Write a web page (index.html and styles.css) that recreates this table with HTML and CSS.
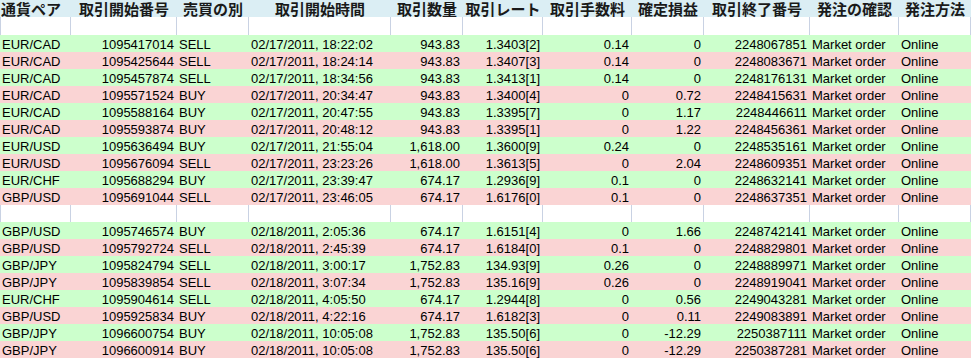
FILE: index.html
```html
<!DOCTYPE html>
<html lang="ja">
<head>
<meta charset="utf-8">
<title>取引履歴</title>
<link rel="stylesheet" href="styles.css">
</head>
<body>
<div class="sheet">
  <div class="row head">
    <div class="cell first">通貨ペア</div>
    <div class="cell">取引開始番号</div>
    <div class="cell">売買の別</div>
    <div class="cell">取引開始時間</div>
    <div class="cell">取引数量</div>
    <div class="cell">取引レート</div>
    <div class="cell">取引手数料</div>
    <div class="cell">確定損益</div>
    <div class="cell">取引終了番号</div>
    <div class="cell">発注の確認</div>
    <div class="cell">発注方法</div>
  </div>
  <div class="row blank tall">
    <div class="cell"></div><div class="cell"></div><div class="cell"></div><div class="cell"></div><div class="cell"></div><div class="cell"></div><div class="cell"></div><div class="cell"></div><div class="cell"></div><div class="cell"></div><div class="cell"></div>
  </div>

  <div class="row green"><div class="cell">EUR/CAD</div><div class="cell num">1095417014</div><div class="cell">SELL</div><div class="cell">02/17/2011, 18:22:02</div><div class="cell num">943.83</div><div class="cell num">1.3403[2]</div><div class="cell num">0.14</div><div class="cell num">0</div><div class="cell num">2248067851</div><div class="cell">Market order</div><div class="cell">Online</div></div>
  <div class="row pink"><div class="cell">EUR/CAD</div><div class="cell num">1095425644</div><div class="cell">SELL</div><div class="cell">02/17/2011, 18:24:14</div><div class="cell num">943.83</div><div class="cell num">1.3407[3]</div><div class="cell num">0.14</div><div class="cell num">0</div><div class="cell num">2248083671</div><div class="cell">Market order</div><div class="cell">Online</div></div>
  <div class="row green"><div class="cell">EUR/CAD</div><div class="cell num">1095457874</div><div class="cell">SELL</div><div class="cell">02/17/2011, 18:34:56</div><div class="cell num">943.83</div><div class="cell num">1.3413[1]</div><div class="cell num">0.14</div><div class="cell num">0</div><div class="cell num">2248176131</div><div class="cell">Market order</div><div class="cell">Online</div></div>
  <div class="row pink"><div class="cell">EUR/CAD</div><div class="cell num">1095571524</div><div class="cell">BUY</div><div class="cell">02/17/2011, 20:34:47</div><div class="cell num">943.83</div><div class="cell num">1.3400[4]</div><div class="cell num">0</div><div class="cell num">0.72</div><div class="cell num">2248415631</div><div class="cell">Market order</div><div class="cell">Online</div></div>
  <div class="row green"><div class="cell">EUR/CAD</div><div class="cell num">1095588164</div><div class="cell">BUY</div><div class="cell">02/17/2011, 20:47:55</div><div class="cell num">943.83</div><div class="cell num">1.3395[7]</div><div class="cell num">0</div><div class="cell num">1.17</div><div class="cell num">2248446611</div><div class="cell">Market order</div><div class="cell">Online</div></div>
  <div class="row pink"><div class="cell">EUR/CAD</div><div class="cell num">1095593874</div><div class="cell">BUY</div><div class="cell">02/17/2011, 20:48:12</div><div class="cell num">943.83</div><div class="cell num">1.3395[1]</div><div class="cell num">0</div><div class="cell num">1.22</div><div class="cell num">2248456361</div><div class="cell">Market order</div><div class="cell">Online</div></div>
  <div class="row green"><div class="cell">EUR/USD</div><div class="cell num">1095636494</div><div class="cell">BUY</div><div class="cell">02/17/2011, 21:55:04</div><div class="cell num">1,618.00</div><div class="cell num">1.3600[9]</div><div class="cell num">0.24</div><div class="cell num">0</div><div class="cell num">2248535161</div><div class="cell">Market order</div><div class="cell">Online</div></div>
  <div class="row pink"><div class="cell">EUR/USD</div><div class="cell num">1095676094</div><div class="cell">SELL</div><div class="cell">02/17/2011, 23:23:26</div><div class="cell num">1,618.00</div><div class="cell num">1.3613[5]</div><div class="cell num">0</div><div class="cell num">2.04</div><div class="cell num">2248609351</div><div class="cell">Market order</div><div class="cell">Online</div></div>
  <div class="row green"><div class="cell">EUR/CHF</div><div class="cell num">1095688294</div><div class="cell">BUY</div><div class="cell">02/17/2011, 23:39:47</div><div class="cell num">674.17</div><div class="cell num">1.2936[9]</div><div class="cell num">0.1</div><div class="cell num">0</div><div class="cell num">2248632141</div><div class="cell">Market order</div><div class="cell">Online</div></div>
  <div class="row pink"><div class="cell">GBP/USD</div><div class="cell num">1095691044</div><div class="cell">SELL</div><div class="cell">02/17/2011, 23:46:05</div><div class="cell num">674.17</div><div class="cell num">1.6176[0]</div><div class="cell num">0.1</div><div class="cell num">0</div><div class="cell num">2248637351</div><div class="cell">Market order</div><div class="cell">Online</div></div>

  <div class="row blank">
    <div class="cell"></div><div class="cell"></div><div class="cell"></div><div class="cell"></div><div class="cell"></div><div class="cell"></div><div class="cell"></div><div class="cell"></div><div class="cell"></div><div class="cell"></div><div class="cell"></div>
  </div>

  <div class="row green"><div class="cell">GBP/USD</div><div class="cell num">1095746574</div><div class="cell">BUY</div><div class="cell">02/18/2011, 2:05:36</div><div class="cell num">674.17</div><div class="cell num">1.6151[4]</div><div class="cell num">0</div><div class="cell num">1.66</div><div class="cell num">2248742141</div><div class="cell">Market order</div><div class="cell">Online</div></div>
  <div class="row pink"><div class="cell">GBP/USD</div><div class="cell num">1095792724</div><div class="cell">SELL</div><div class="cell">02/18/2011, 2:45:39</div><div class="cell num">674.17</div><div class="cell num">1.6184[0]</div><div class="cell num">0.1</div><div class="cell num">0</div><div class="cell num">2248829801</div><div class="cell">Market order</div><div class="cell">Online</div></div>
  <div class="row green"><div class="cell">GBP/JPY</div><div class="cell num">1095824794</div><div class="cell">SELL</div><div class="cell">02/18/2011, 3:00:17</div><div class="cell num">1,752.83</div><div class="cell num">134.93[9]</div><div class="cell num">0.26</div><div class="cell num">0</div><div class="cell num">2248889971</div><div class="cell">Market order</div><div class="cell">Online</div></div>
  <div class="row pink"><div class="cell">GBP/JPY</div><div class="cell num">1095839854</div><div class="cell">SELL</div><div class="cell">02/18/2011, 3:07:34</div><div class="cell num">1,752.83</div><div class="cell num">135.16[9]</div><div class="cell num">0.26</div><div class="cell num">0</div><div class="cell num">2248919041</div><div class="cell">Market order</div><div class="cell">Online</div></div>
  <div class="row green"><div class="cell">EUR/CHF</div><div class="cell num">1095904614</div><div class="cell">SELL</div><div class="cell">02/18/2011, 4:05:50</div><div class="cell num">674.17</div><div class="cell num">1.2944[8]</div><div class="cell num">0</div><div class="cell num">0.56</div><div class="cell num">2249043281</div><div class="cell">Market order</div><div class="cell">Online</div></div>
  <div class="row pink"><div class="cell">GBP/USD</div><div class="cell num">1095925834</div><div class="cell">BUY</div><div class="cell">02/18/2011, 4:22:16</div><div class="cell num">674.17</div><div class="cell num">1.6182[3]</div><div class="cell num">0</div><div class="cell num">0.11</div><div class="cell num">2249083891</div><div class="cell">Market order</div><div class="cell">Online</div></div>
  <div class="row green"><div class="cell">GBP/JPY</div><div class="cell num">1096600754</div><div class="cell">BUY</div><div class="cell">02/18/2011, 10:05:08</div><div class="cell num">1,752.83</div><div class="cell num">135.50[6]</div><div class="cell num">0</div><div class="cell num">-12.29</div><div class="cell num">2250387111</div><div class="cell">Market order</div><div class="cell">Online</div></div>
  <div class="row pink"><div class="cell">GBP/JPY</div><div class="cell num">1096600914</div><div class="cell">BUY</div><div class="cell">02/18/2011, 10:05:08</div><div class="cell num">1,752.83</div><div class="cell num">135.50[6]</div><div class="cell num">0</div><div class="cell num">-12.29</div><div class="cell num">2250387281</div><div class="cell">Market order</div><div class="cell">Online</div></div>
</div>
</body>
</html>
```

FILE: styles.css
```css
* {
  box-sizing: border-box;
}

body {
  margin: 0;
  background: #ffffff;
  color: #000000;
  font-family: "Liberation Sans", Arial, sans-serif;
}

.sheet {
  width: 971px;
}

.row {
  display: grid;
  grid-template-columns: 71px 106px 72px 142px 72px 80px 89px 72px 106px 89px 72px;
  height: 17px;
}

.cell {
  font-size: 13px;
  line-height: 14px;
  padding: 3px 3px 0 2px;
  white-space: nowrap;
  overflow: hidden;
}

.num {
  text-align: right;
}

.head {
  background: #dbeef4;
}

.head .cell {
  font-family: "Noto Sans CJK JP", "Noto Sans CJK SC", sans-serif;
  font-weight: 700;
  font-size: 15px;
  line-height: 17px;
  padding: 0;
  text-align: center;
  color: #1a1a1a;
  overflow: visible;
}

.head .cell.first {
  text-align: left;
  padding-left: 1px;
}

.blank {
  background: #ffffff;
}

.blank.tall {
  height: 18px;
}

.blank .cell {
  border-right: 1px solid #c9d2e3;
}

.blank .cell:first-child {
  border-left: 1px solid #c9d2e3;
}

.green {
  background: #ccffcc;
}

.pink {
  background: #fad4d4;
}
```
